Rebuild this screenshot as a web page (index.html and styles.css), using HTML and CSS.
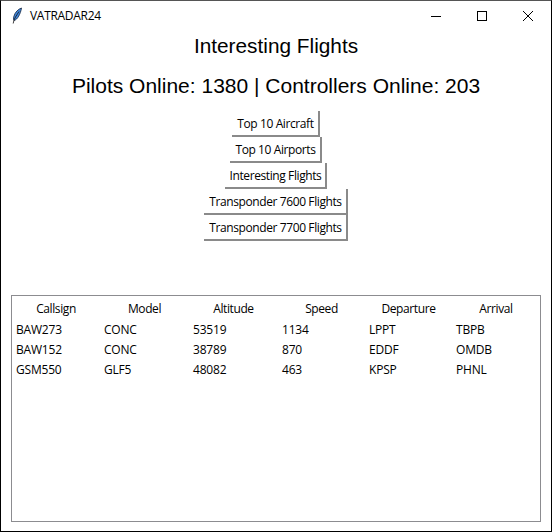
FILE: index.html
```html
<!DOCTYPE html>
<html lang="en">
<head>
    <meta charset="UTF-8">
    <title>VATRADAR24</title>
    <link rel="stylesheet" href="styles.css">
</head>
<body>

    <div id="window">
        <div class="titlebar">
            <svg class="feather" width="12" height="18" viewBox="0 0 12 18">
                <path d="M10.500 1C7.500 2 4 5 2.800 9.500C2.300 11.500 2.500 13 3.200 13.500C6.500 12.500 9.500 7 10.500 1Z" fill="#3f86dc" stroke="#14233c" stroke-width="0.8"/>
                <path d="M8 4.500L4.500 10L3 13L2.200 16.500" fill="none" stroke="#111" stroke-width="0.8"/>
            </svg>
            <span class="app-name">VATRADAR24</span>
            <div class="window-controls">
                <svg width="12" height="12" viewBox="0 0 12 12"><path d="M1 6.500H11" stroke="#000" fill="none"/></svg>
                <svg width="12" height="12" viewBox="0 0 12 12"><rect x="1.500" y="1.500" width="9" height="9" stroke="#000" fill="none"/></svg>
                <svg width="12" height="12" viewBox="0 0 12 12"><path d="M1 1L11 11M11 1L1 11" stroke="#000" fill="none"/></svg>
            </div>
        </div>

        <h1 class="view-title">Interesting Flights</h1>
        <h2 class="status">Pilots Online: 1380 | Controllers Online: 203</h2>

        <div class="menu">
            <button>Top 10 Aircraft</button>
            <button>Top 10 Airports</button>
            <button>Interesting Flights</button>
            <button>Transponder 7600 Flights</button>
            <button>Transponder 7700 Flights</button>
        </div>

        <div class="flights">
            <div class="row head">
                <span>Callsign</span><span>Model</span><span>Altitude</span><span>Speed</span><span>Departure</span><span>Arrival</span>
            </div>
            <div class="row">
                <span>BAW273</span><span>CONC</span><span>53519</span><span>1134</span><span>LPPT</span><span>TBPB</span>
            </div>
            <div class="row">
                <span>BAW152</span><span>CONC</span><span>38789</span><span>870</span><span>EDDF</span><span>OMDB</span>
            </div>
            <div class="row">
                <span>GSM550</span><span>GLF5</span><span>48082</span><span>463</span><span>KPSP</span><span>PHNL</span>
            </div>
        </div>
    </div>

</body>
</html>
```

FILE: styles.css
```css
html, body {
    margin: 0;
    height: 100%;
}

body {
    background-color: #fff;
    font-family: 'Open Sans', 'Noto Sans', sans-serif;
    font-size: 12px;
    color: #000;
}

#window {
    box-sizing: border-box;
    width: 552px;
    height: 532px;
    border: 1px solid #000;
    border-top-color: #555;
    display: flex;
    flex-direction: column;
    align-items: center;
}

.titlebar {
    width: 100%;
    height: 29px;
    display: flex;
    align-items: center;
    padding-left: 10px;
    box-sizing: border-box;
}

.feather {
    margin-right: 7px;
}

.app-name {
    letter-spacing: -0.3px;
}

.window-controls {
    margin-left: auto;
    display: flex;
    gap: 34px;
    padding-right: 17px;
}

.view-title,
.status {
    font-family: 'Liberation Sans', Arial, sans-serif;
    font-weight: normal;
    margin: 0;
    line-height: 24px;
}

.view-title {
    font-size: 20.8px;
    margin-top: 4px;
}

.status {
    font-size: 21px;
    margin-top: 16px;
}

.menu {
    display: flex;
    flex-direction: column;
    align-items: center;
    margin-top: 13px;
}

button {
    box-sizing: border-box;
    height: 26px;
    padding: 0 4px 0 5px;
    background-color: #fff;
    border: none;
    border-right: 2px solid #8a8a8a;
    border-bottom: 2px solid #8a8a8a;
    font-family: inherit;
    font-size: 12px;
    letter-spacing: -0.4px;
    color: #000;
}

.flights {
    box-sizing: border-box;
    width: 530px;
    height: 227px;
    margin-top: 54px;
    border: 1px solid #8c8c90;
    padding-top: 2px;
}

.row {
    display: grid;
    grid-template-columns: 88px 89px 89px 87px 87px 88px;
    height: 20px;
    align-items: center;
    padding-left: 4px;
    letter-spacing: -0.2px;
}

.head {
    height: 21px;
    text-align: center;
    padding-left: 0;
    letter-spacing: -0.4px;
}
```
